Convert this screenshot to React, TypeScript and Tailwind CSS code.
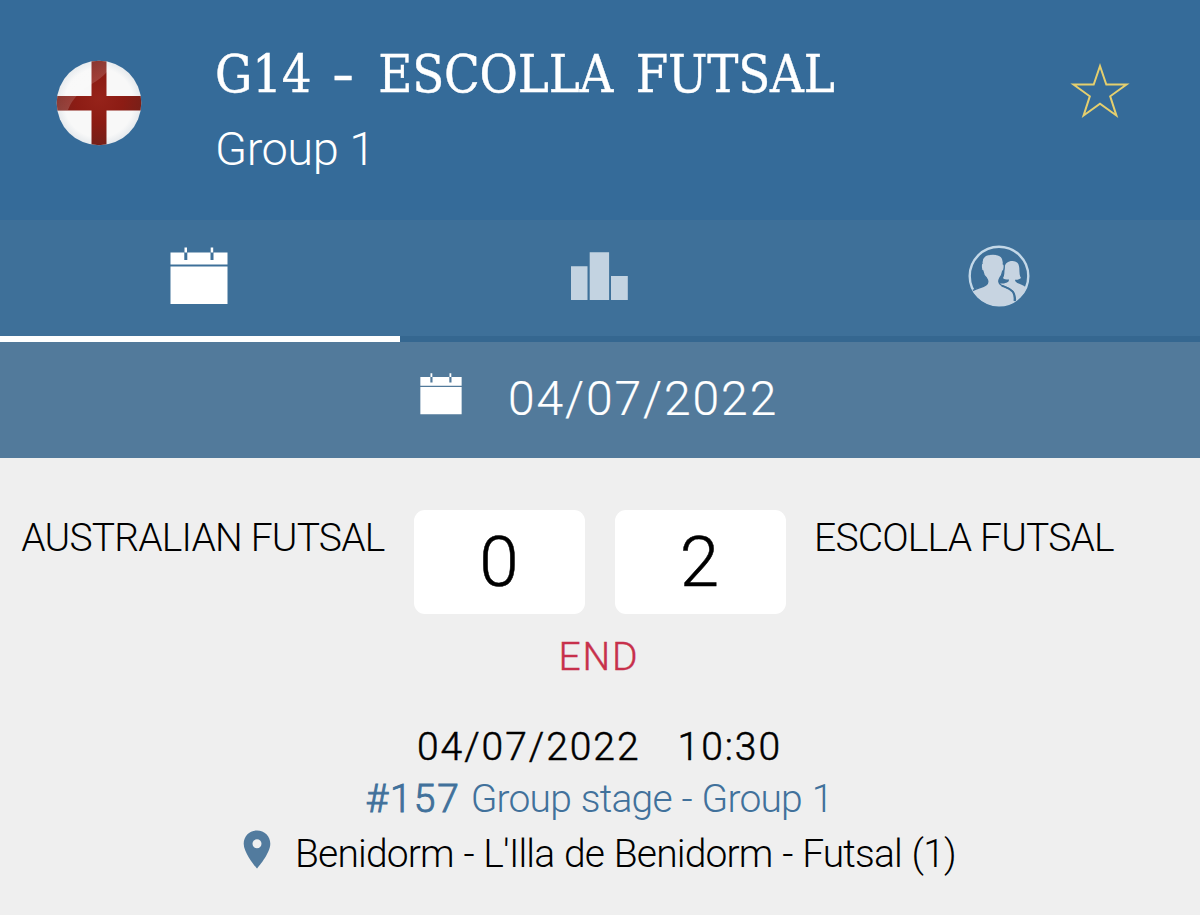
function EnglandFlag() {
  return (
    <svg className="mt-[60px] size-[86px] shrink-0" viewBox="0 0 86 86">
      <defs>
        <clipPath id="flag-clip">
          <circle cx="43" cy="43" r="42.3" />
        </clipPath>
        <radialGradient id="flag-cross" cx="0.5" cy="0.45" r="0.55">
          <stop offset="0" stopColor="#96231a" />
          <stop offset="0.5" stopColor="#8c1c14" />
          <stop offset="1" stopColor="#742019" />
        </radialGradient>
        <linearGradient id="flag-gloss" x1="0" y1="0" x2="1" y2="1">
          <stop offset="0" stopColor="#fff" stopOpacity="0.03" />
          <stop offset="1" stopColor="#fff" stopOpacity="0.26" />
        </linearGradient>
        <radialGradient id="flag-base">
          <stop offset="0.8" stopColor="#f8f8f8" />
          <stop offset="1" stopColor="#e4e8ec" />
        </radialGradient>
      </defs>
      <g clipPath="url(#flag-clip)">
        <rect width="86" height="86" fill="url(#flag-base)" />
        <path d="M35.5 0h15v36h36v14.5h-36V86h-15V50.5H0V36h35.5z" fill="url(#flag-cross)" />
        <path d="M0 0H58C51 18 37 22 27 30C19 37 15 42 12 50H0z" fill="url(#flag-gloss)" />
      </g>
    </svg>
  );
}

function StarIcon() {
  return (
    <svg className="mt-[62px] h-[58px] w-[60px] shrink-0" viewBox="0 0 60 58" fill="none">
      <path
        d="M30 4L36.3 22.6H56.5L40.2 34.3L46.4 53.5L30 41.8L13.6 53.5L19.8 34.3L3.5 22.6H23.7Z"
        stroke="#e5cf6e"
        strokeWidth="2"
      />
    </svg>
  );
}

function CalendarIcon({ className, gap }: { className: string; gap: string }) {
  return (
    <svg className={className} viewBox="0 0 58 58">
      <path fill="#fff" d="M0.5 5.5h57v12h-57zM0.5 19.5h57v37.5h-57z" />
      <path fill={gap} d="M14.3 5h3v8h-3zM40.5 5h3v8h-3z" />
      <path fill="#fff" d="M14.5 0.5h2.5v5h-2.5zM40.7 0.5h2.5v5h-2.5z" />
    </svg>
  );
}

function RankingIcon() {
  return (
    <svg className="mt-8 mr-[2px] h-12 w-[58px]" viewBox="0 0 58 48" fill="#c3d3e1">
      <path d="M1 14.3h16.5V48H1zM19.7 0.3h19.4V48H19.7zM41 24h16.8v24H41z" />
    </svg>
  );
}

function PlayersIcon() {
  return (
    <svg className="mt-[25px] mr-[2px] size-[62px]" viewBox="0 0 62 62">
      <defs>
        <clipPath id="players-clip">
          <circle cx="31" cy="31" r="30" />
        </clipPath>
      </defs>
      <circle cx="31" cy="31" r="29.3" fill="none" stroke="#c3d8e8" strokeWidth="2.4" />
      <g clipPath="url(#players-clip)" fill="#c7d4e1">
        <path d="M36 38.5C40 37.5 41 36.5 41 34.5C38 34.5 35.5 34 35 33C36.5 31 36.5 27 36.5 23C37 18 40 16 44.3 16C49 16 51 18.5 51.3 23C51.5 28 51.5 31 53 33C51.5 34.5 49.5 34.8 47 34.8C47 37 49 38 53 39.5C57 41 59 43 61 46L54 62H30V38.5Z" />
        <path
          d="M1 48C6 43 14 43 18 40C20.5 38 20.5 36 18.5 33C16.3 31 15.2 28.5 14.9 26C13 25.5 12.8 19 14 18.5C13.3 11.5 18 9 25 9C33 9 36 13 35.3 19C36.8 19.5 36.4 25.5 34.7 26C34.2 29 33.3 31 31.8 33C30.2 35.5 30.5 38.5 33 40C36.5 42 42 43 45 46.5C47 49 47.6 52 47.6 57L40 64H0Z"
          stroke="#3e7099"
          strokeWidth="1.3"
        />
        <path
          d="M33.5 40.5C37 42.3 41 42.5 44.3 46.3C46.5 49 46.8 51.5 46.5 56"
          fill="none"
          stroke="#3e7099"
          strokeWidth="1.8"
        />
      </g>
    </svg>
  );
}

function PinIcon() {
  return (
    <svg className="-mt-px h-[39px] w-[28px] shrink-0" viewBox="0 0 28 39">
      <path
        fill="#527b9e"
        fillRule="evenodd"
        d="M14 0.5C6.5 0.5 0.7 6.3 0.7 13.7C0.7 23.5 14 38.5 14 38.5S27.3 23.5 27.3 13.7C27.3 6.3 21.5 0.5 14 0.5ZM14 9.3A4.5 4.5 0 1 1 14 18.3A4.5 4.5 0 1 1 14 9.3Z"
      />
    </svg>
  );
}

function Header() {
  return (
    <header className="flex h-[220px] bg-[#356b99] pl-14 text-white">
      <EnglandFlag />
      <div className="ml-[73px] w-[855px] pt-[44px]">
        <h1 className="font-['DejaVu_Serif_Condensed','DejaVu_Serif',serif] text-[52px] leading-[60px] tracking-[-0.2px] whitespace-nowrap [-webkit-text-stroke:0.4px] [word-spacing:8px]">
          G14 <span className="mr-[5px] ml-px inline-block scale-x-140">-</span> ESCOLLA FUTSAL
        </h1>
        <p className="mt-[17px] text-[47px] leading-[56px] font-light tracking-[-0.5px]">Group 1</p>
      </div>
      <StarIcon />
    </header>
  );
}

function Tabs() {
  return (
    <nav className="grid h-[122px] grid-cols-3 bg-[#3e7099]">
      <div className="flex justify-center border-b-6 border-white">
        <CalendarIcon className="mt-[27px] mr-[2px] size-[58px]" gap="#3e7099" />
      </div>
      <div className="flex justify-center border-b-6 border-[#356790]">
        <RankingIcon />
      </div>
      <div className="flex justify-center border-b-6 border-[#356790]">
        <PlayersIcon />
      </div>
    </nav>
  );
}

function Score({ value }: { value: number }) {
  return (
    <div className="flex h-[104px] w-[171px] justify-center rounded-[11px] bg-white pr-px text-[71px] leading-[103px] tracking-normal [-webkit-text-stroke:0.5px]">
      {value}
    </div>
  );
}

function Match() {
  return (
    <main className="flex-1 pt-[52px] text-[39px] leading-[46px] font-light tracking-[-0.8px] text-black">
      <div className="grid grid-cols-[384px_171px_171px_1fr] gap-x-[29.5px] pl-[0.5px]">
        <div className="pt-[5px] text-right whitespace-nowrap">AUSTRALIAN FUTSAL</div>
        <Score value={0} />
        <Score value={2} />
        <div className="-ml-px pt-[5px] whitespace-nowrap">ESCOLLA FUTSAL</div>
      </div>
      <div className="mt-[20px] pr-[2px] text-center tracking-[1.8px] text-[#c7304b] [-webkit-text-stroke:0.4px]">
        END
      </div>
      <div className="mt-[44px] flex justify-center gap-[37px] pr-px tracking-[1.95px] [-webkit-text-stroke:0.5px]">
        <span>04/07/2022</span>
        <span>10:30</span>
      </div>
      <div className="mt-[6px] flex justify-center gap-[10px] pr-[2px] text-[#41719b]">
        <span className="tracking-[1.9px] [-webkit-text-stroke:0.9px]">#157</span>
        <span className="tracking-[-0.8px] [word-spacing:1px]">Group stage - Group 1</span>
      </div>
      <div className="mt-[9px] flex pl-[243px] whitespace-nowrap">
        <PinIcon />
        <span className="ml-[24px] tracking-[-0.85px] [word-spacing:1px]">
          Benidorm - L'Illa de Benidorm - Futsal (1)
        </span>
      </div>
    </main>
  );
}

export default function App() {
  return (
    <div className="flex h-[915px] w-[1200px] flex-col overflow-hidden bg-[#efefef] font-[Roboto,sans-serif]">
      <Header />
      <Tabs />
      <div className="flex h-[116px] bg-[#527a9b] pl-[420px] text-white">
        <CalendarIcon className="mt-[31px] size-[42px]" gap="#527a9b" />
        <div className="ml-[46px] pt-[29px] text-[48px] leading-[56px] font-light tracking-[1.9px] [-webkit-text-stroke:0.2px]">
          04/07/2022
        </div>
      </div>
      <Match />
    </div>
  );
}
